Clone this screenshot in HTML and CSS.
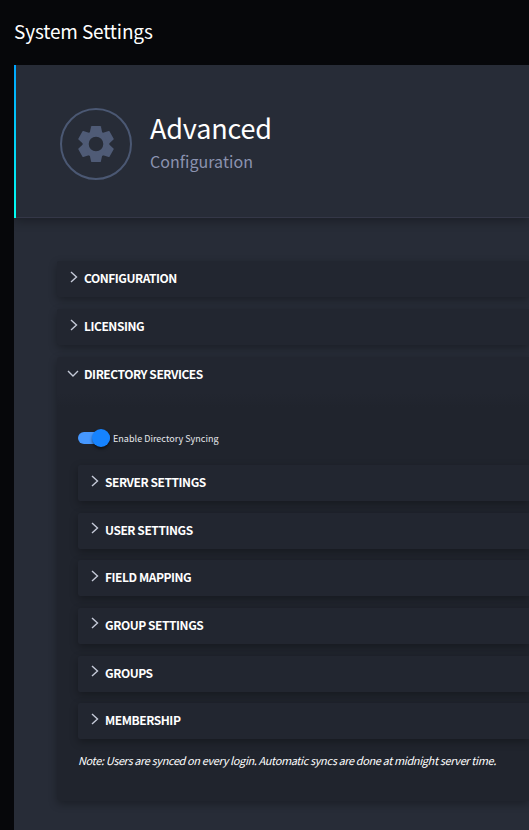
FILE: index.html
```html
<!DOCTYPE html>
<html lang="en">
<head>
<meta charset="utf-8">
<title>System Settings</title>
<link rel="stylesheet" href="styles.css">
</head>
<body>
<svg class="defs" aria-hidden="true">
  <symbol id="chevron" viewBox="0 0 8 12"><path d="M1 1l5.500 5-5.500 5"/></symbol>
  <symbol id="chevron-down" viewBox="0 0 12 8"><path d="M1 1l5 5 5-5"/></symbol>
</svg>
<h1 class="page-title"><span>System Settings</span></h1>
<main class="card">
  <header class="card-header">
    <div class="badge">
      <svg class="gear" viewBox="-18 -18 36 36">
        <circle class="gear-ring" r="10.300"/>
        <path id="tooth" d="M-6.300-11L-4.900-17.400Q-4.700-18-4.200-18H4.200Q4.700-18 4.900-17.400L6.300-11z"/>
        <use href="#tooth" transform="rotate(60)"/>
        <use href="#tooth" transform="rotate(120)"/>
        <use href="#tooth" transform="rotate(180)"/>
        <use href="#tooth" transform="rotate(240)"/>
        <use href="#tooth" transform="rotate(300)"/>
      </svg>
    </div>
    <div class="heading">
      <h2><span>Advanced</span></h2>
      <p><span>Configuration</span></p>
    </div>
  </header>
  <div class="panels">
    <section class="panel"><h3><svg class="chev"><use href="#chevron"/></svg><span>CONFIGURATION</span></h3></section>
    <section class="panel"><h3><svg class="chev"><use href="#chevron"/></svg><span>LICENSING</span></h3></section>
    <section class="panel open">
      <h3><svg class="chev down"><use href="#chevron-down"/></svg><span>DIRECTORY SERVICES</span></h3>
      <div class="content">
        <label class="toggle"><span class="track"><span class="knob"></span></span><span class="toggle-text">Enable Directory Syncing</span></label>
        <div class="subpanels">
          <section class="panel"><h3><svg class="chev"><use href="#chevron"/></svg><span>SERVER SETTINGS</span></h3></section>
          <section class="panel"><h3><svg class="chev"><use href="#chevron"/></svg><span>USER SETTINGS</span></h3></section>
          <section class="panel"><h3><svg class="chev"><use href="#chevron"/></svg><span>FIELD MAPPING</span></h3></section>
          <section class="panel"><h3><svg class="chev"><use href="#chevron"/></svg><span>GROUP SETTINGS</span></h3></section>
          <section class="panel"><h3><svg class="chev"><use href="#chevron"/></svg><span>GROUPS</span></h3></section>
          <section class="panel"><h3><svg class="chev"><use href="#chevron"/></svg><span>MEMBERSHIP</span></h3></section>
        </div>
        <p class="note">Note: Users are synced on every login. Automatic syncs are done at midnight server time.</p>
      </div>
    </section>
  </div>
</main>
</body>
</html>
```
FILE: styles.css
```css
* { box-sizing: border-box; }
html { background: #06070a; }
body {
  margin: 0;
  height: 830px;
  overflow: hidden;
  padding-left: 14px;
  color: #fff;
  font-family: "Noto Sans CJK JP", "Open Sans", sans-serif;
}
h1, h2, h3, p { margin: 0; font-weight: 400; white-space: nowrap; }
.defs { position: absolute; width: 0; height: 0; }
.page-title { height: 65px; line-height: 62px; font-size: 19px; letter-spacing: -.15px; }
.card { height: 765px; background: #272c37; }
.card-header {
  position: relative;
  display: flex;
  height: 153px;
  padding: 43px 0 0 46px;
  border-bottom: 1px solid #343747;
  box-shadow: 0 3px 10px rgba(0, 0, 0, .3);
  clip-path: inset(0 0 -20px 0);
}
.card-header::before {
  content: "";
  position: absolute;
  left: 0;
  top: 0;
  width: 2px;
  height: 153px;
  background: linear-gradient(#00a5ff, #00fff0);
}
.badge {
  display: flex;
  align-items: center;
  justify-content: center;
  width: 72px;
  height: 72px;
  border: 2px solid #4b5873;
  border-radius: 50%;
}
.gear { width: 36px; height: 36px; fill: #4f5b76; }
.gear-ring { fill: none; stroke: #4f5b76; stroke-width: 6; }
.heading { padding-left: 18px; }
.heading h2 { height: 41px; line-height: 40px; font-size: 27px; letter-spacing: -.15px; }
.heading p { height: 24px; line-height: 24px; font-size: 16px; letter-spacing: .04px; color: #8b93b0; }
.panels { display: grid; gap: 12px; padding: 43px 0 0 43px; }
.panel {
  height: 36px;
  background: #222630;
  border-radius: 2px 0 0 2px;
  box-shadow: 0 3px 8px rgba(0, 0, 0, .3);
}
.panel h3 {
  display: flex;
  height: 36px;
  padding-left: 12.500px;
  line-height: 34px;
  font-size: 12px;
  font-weight: 700;
  letter-spacing: -.45px;
}
.panel h3 span { margin-left: 6.500px; }
.chev {
  width: 8px;
  height: 12px;
  margin-top: 9.500px;
  fill: none;
  stroke: #c5cad8;
  stroke-width: 1.400;
}
.chev.down { width: 12px; height: 8px; margin: 12.500px -1.500px 0 -2.500px; }
.open { height: 444px; background: linear-gradient(#222630 36px, #20242d 50px); }
.content { padding: 35px 0 0 21px; }
.toggle { display: flex; align-items: center; height: 20px; }
.track {
  display: flex;
  align-items: center;
  justify-content: flex-end;
  width: 32px;
  height: 12px;
  border-radius: 6px;
  background: #4698ff;
}
.knob {
  flex: none;
  width: 18px;
  height: 18px;
  border-radius: 50%;
  background: #1683ff;
  box-shadow: 0 2px 3px rgba(0, 0, 0, .5);
}
.toggle-text { margin: 2px 0 0 3px; font-size: 9px; letter-spacing: .03px; line-height: 20px; color: #e6e8ec; white-space: nowrap; }
.subpanels { display: grid; gap: 11.670px; margin-top: 17px; }
.note { margin-top: 9px; line-height: 24px; font-size: 11px; font-style: italic; letter-spacing: -.395px; }
```
